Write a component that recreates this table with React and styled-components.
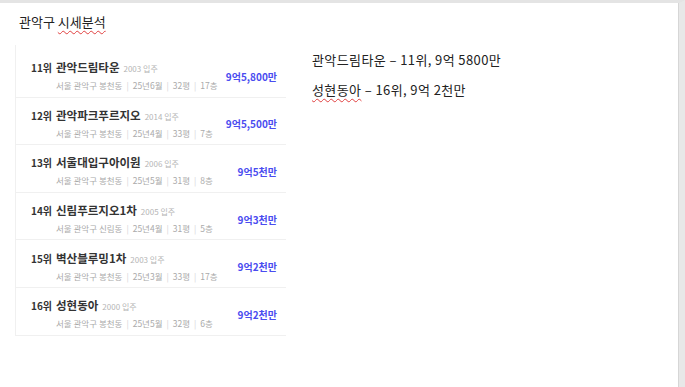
import React from "react";
import styled, { createGlobalStyle } from "styled-components";

const Global = createGlobalStyle`
  html, body { margin: 0; padding: 0; background: #ffffff; }
  body { font-family: "Noto Sans CJK KR", "Noto Sans", sans-serif; }
`;

const Frame = styled.div`
  box-sizing: border-box;
  width: 685px;
  height: 387px;
  border-top: 3px solid #e4e4e4;
  border-right: 6px solid #e8e8e8;
  box-shadow: inset -1px 0 0 #d6d6d6;
  background: #fff;
  padding: 10px 0 0 0;
`;

const Title = styled.h1`
  margin: 0 0 0 19px;
  font-size: 13px;
  line-height: 18px;
  font-weight: 400;
  color: #222;
`;

const Squiggle = styled.span`
  text-decoration: underline wavy #e04040;
  text-decoration-thickness: 1px;
  text-underline-offset: 3px;
`;

const Content = styled.div`
  display: flex;
  margin-top: 14px;
  padding-left: 15px;
  gap: 26px;
`;

const Card = styled.ul`
  list-style: none;
  margin: 0;
  padding: 5px 0 0 0;
  width: 270px;
  border-left: 1px solid #f0f0f0;
`;

const Row = styled.li`
  display: flex;
  align-items: center;
  justify-content: space-between;
  height: 47.6px;
  box-sizing: border-box;
  padding: 6px 9px 0 15px;
  border-bottom: 1px solid #f0f0f0;
`;

const Info = styled.div`
  display: flex;
  flex-direction: column;
  gap: 1px;
`;

const Headline = styled.div`
  display: flex;
  align-items: baseline;
  white-space: nowrap;
  line-height: 16px;
`;

const Rank = styled.span`
  font-size: 10px;
  font-weight: 700;
  color: #333;
  width: 25px;
`;

const Name = styled.span`
  font-size: 11.5px;
  font-weight: 700;
  color: #333;
`;

const Year = styled.span`
  font-size: 8px;
  color: #b5b5b5;
  margin-left: 4px;
`;

const Meta = styled.div`
  font-size: 8.5px;
  line-height: 15px;
  color: #aaaaaa;
  padding-left: 25px;
  white-space: nowrap;
`;

const Sep = styled.span`
  color: #d4d4d4;
  margin: 0 4px;
`;

const Price = styled.span`
  font-size: 10px;
  font-weight: 700;
  color: #4a4cf0;
  white-space: nowrap;
`;

const Notes = styled.div`
  padding-top: 6px;
  display: flex;
  flex-direction: column;
  gap: 12px;
`;

const Note = styled.p`
  margin: 0;
  font-size: 13px;
  line-height: 18px;
  letter-spacing: 0.4px;
  color: #222;
`;

const items = [
  { rank: "11위", name: "관악드림타운", year: "2003 입주", meta: ["서울 관악구 봉천동", "25년6월", "32평", "17층"], price: "9억5,800만" },
  { rank: "12위", name: "관악파크푸르지오", year: "2014 입주", meta: ["서울 관악구 봉천동", "25년4월", "33평", "7층"], price: "9억5,500만" },
  { rank: "13위", name: "서울대입구아이원", year: "2006 입주", meta: ["서울 관악구 봉천동", "25년5월", "31평", "8층"], price: "9억5천만" },
  { rank: "14위", name: "신림푸르지오1차", year: "2005 입주", meta: ["서울 관악구 신림동", "25년4월", "31평", "5층"], price: "9억3천만" },
  { rank: "15위", name: "벽산블루밍1차", year: "2003 입주", meta: ["서울 관악구 봉천동", "25년3월", "33평", "17층"], price: "9억2천만" },
  { rank: "16위", name: "성현동아", year: "2000 입주", meta: ["서울 관악구 봉천동", "25년5월", "32평", "6층"], price: "9억2천만" },
];

export default function App() {
  return (
    <>
      <Global />
      <Frame>
        <Title>
          관악구 <Squiggle>시세분석</Squiggle>
        </Title>
        <Content>
          <Card>
            {items.map((it) => (
              <Row key={it.rank}>
                <Info>
                  <Headline>
                    <Rank>{it.rank}</Rank>
                    <Name>{it.name}</Name>
                    <Year>{it.year}</Year>
                  </Headline>
                  <Meta>
                    {it.meta.map((m, i) => (
                      <React.Fragment key={i}>
                        {i > 0 && <Sep>|</Sep>}
                        {m}
                      </React.Fragment>
                    ))}
                  </Meta>
                </Info>
                <Price>{it.price}</Price>
              </Row>
            ))}
          </Card>
          <Notes>
            <Note>관악드림타운 – 11위, 9억 5800만</Note>
            <Note>
              <Squiggle>성현동아</Squiggle> – 16위, 9억 2천만
            </Note>
          </Notes>
        </Content>
      </Frame>
    </>
  );
}
